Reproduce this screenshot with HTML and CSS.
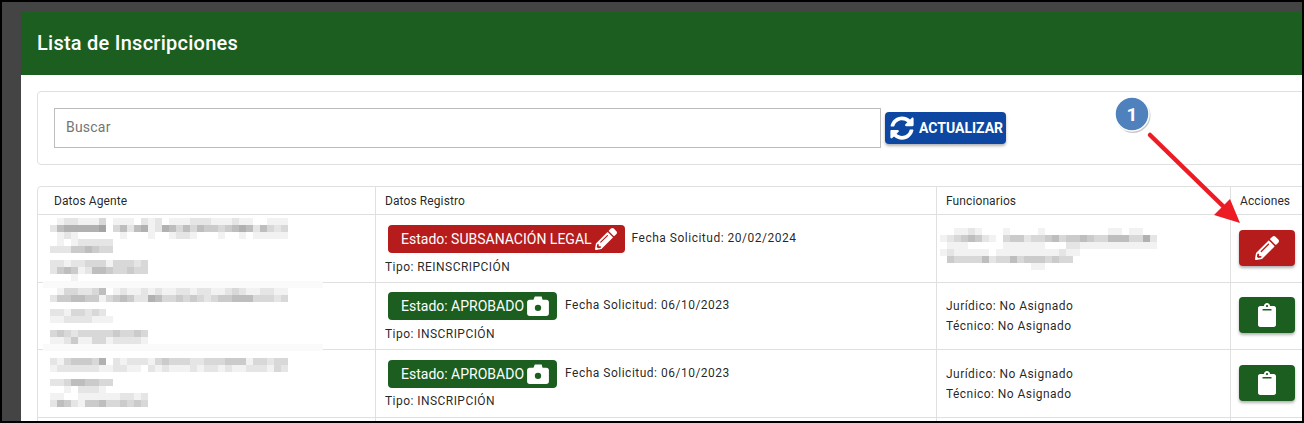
FILE: index.html
```html
<!DOCTYPE html>
<html lang="es">
<head>
    <meta charset="UTF-8">
    <title>Lista de Inscripciones</title>
    <link rel="stylesheet" href="styles.css">
</head>
<body>
    <div class="panel">
        <div class="toolbar">Lista de Inscripciones</div>
        <div class="content">
            <div class="search-card">
                <div class="search-input">Buscar</div>
                <button class="btn-update">
                    <svg class="icon-sync" viewBox="0 0 512 512"><path d="M370.72 133.28C339.458 104.008 298.888 87.962 255.848 88c-77.458.068-144.328 53.178-162.791 126.85-1.344 5.363-6.122 9.15-11.651 9.15H24.103c-7.498 0-13.194-6.807-11.807-14.176C33.933 94.924 134.813 8 256 8c66.448 0 126.791 26.136 171.315 68.685L463.03 40.97C478.149 25.851 504 36.559 504 57.941V192c0 13.255-10.745 24-24 24H345.941c-21.382 0-32.09-25.851-16.971-40.971l41.75-41.749zM32 296h134.059c21.382 0 32.09 25.851 16.971 40.971l-41.75 41.75c31.262 29.273 71.835 45.319 114.876 45.28 77.418-.07 144.315-53.144 162.787-126.849 1.344-5.363 6.122-9.15 11.651-9.15h57.304c7.498 0 13.194 6.807 11.807 14.176C478.067 417.076 377.187 504 256 504c-66.448 0-126.791-26.136-171.315-68.685L48.97 471.03C33.851 486.149 8 475.441 8 454.059V320c0-13.255 10.745-24 24-24z"/></svg>
                    ACTUALIZAR
                </button>
            </div>

            <div class="table-wrap">
                <table>
                    <thead>
                        <tr>
                            <th class="col-agent">Datos Agente</th>
                            <th class="col-reg">Datos Registro</th>
                            <th class="col-func">Funcionarios</th>
                            <th class="col-act">Acciones</th>
                        </tr>
                    </thead>
                    <tbody>
                        <tr class="row-a">
                            <td class="agent">
                                <div class="redact" data-rows="0122111301110212011122211121100111|2566666703525612653535443456525323|0121000000100010012210001001011111|0101222220|2224454330||22122333133323|24541255433433|0001"></div>
                                <div class="smudge"></div>
                            </td>
                            <td class="reg">
                                <div class="state">
                                    <span class="chip chip-red">Estado: SUBSANACIÓN LEGAL
                                        <svg class="icon-pencil" viewBox="0 0 512 512"><path d="M497.9 142.1l-46.1 46.1c-4.7 4.7-12.3 4.7-17 0l-111-111c-4.7-4.7-4.7-12.3 0-17l46.1-46.1c18.7-18.7 49.1-18.7 67.9 0l60.1 60.1c18.8 18.7 18.8 49.1 0 67.9zM284.2 99.8L21.6 362.4.4 483.9c-2.9 16.4 11.4 30.6 27.8 27.8l121.5-21.3 262.6-262.6c4.7-4.7 4.7-12.3 0-17l-111-111c-4.8-4.7-12.4-4.7-17.1 0zM124.1 339.9c-5.5-5.5-5.5-14.3 0-19.8l154-154c5.5-5.5 14.3-5.5 19.8 0s5.5 14.3 0 19.8l-154 154c-5.5 5.5-14.3 5.5-19.8 0zM88 424h48v36.3l-64.5 11.3-31.1-31.1L51.7 376H88v48z"/></svg>
                                    </span>
                                    <span class="date">Fecha Solicitud: 20/02/2024</span>
                                </div>
                                <div class="tipo">Tipo: REINSCRIPCIÓN</div>
                            </td>
                            <td class="func">
                                <div class="redact redact-func" data-rows="0011210001000010000000001101100|1234542103442334534454335553362|0111000001111110002211111111111|121111101111111112110|0433335233534443433|0000000000000110"></div>
                            </td>
                            <td class="act">
                                <button class="btn-act btn-red">
                                    <svg class="icon-edit" viewBox="0 0 512 512"><path d="M497.9 142.1l-46.1 46.1c-4.7 4.7-12.3 4.7-17 0l-111-111c-4.7-4.7-4.7-12.3 0-17l46.1-46.1c18.7-18.7 49.1-18.7 67.9 0l60.1 60.1c18.8 18.7 18.8 49.1 0 67.9zM284.2 99.8L21.6 362.4.4 483.9c-2.9 16.4 11.4 30.6 27.8 27.8l121.5-21.3 262.6-262.6c4.7-4.7 4.7-12.3 0-17l-111-111c-4.8-4.7-12.4-4.7-17.1 0zM124.1 339.9c-5.5-5.5-5.5-14.3 0-19.8l154-154c5.5-5.5 14.3-5.5 19.8 0s5.5 14.3 0 19.8l-154 154c-5.5 5.5-14.3 5.5-19.8 0zM88 424h48v36.3l-64.5 11.3-31.1-31.1L51.7 376H88v48z"/></svg>
                                </button>
                            </td>
                        </tr>
                        <tr class="row-b">
                            <td class="agent">
                                <div class="redact" data-rows="0133223501211212112212211232112211|2445544134542265334343234455533323||2213323200|1122221110||34323333343343|11241133122221"></div>
                                <div class="smudge smudge-low"></div>
                            </td>
                            <td class="reg">
                                <div class="state">
                                    <span class="chip chip-green">Estado: APROBADO
                                        <svg class="icon-camera" viewBox="0 0 24 22"><path fill-rule="evenodd" d="M3 4h4l1.500-3.500h7.500L17 4h4a3 3 0 0 1 3 3v12a3 3 0 0 1-3 3H3a3 3 0 0 1-3-3V7a3 3 0 0 1 3-3zM12 9.500a3.500 3.500 0 1 0 0 7 3.500 3.500 0 0 0 0-7z"/></svg>
                                    </span>
                                    <span class="date">Fecha Solicitud: 06/10/2023</span>
                                </div>
                                <div class="tipo">Tipo: INSCRIPCIÓN</div>
                            </td>
                            <td class="func">
                                <div class="func-line">Jurídico: No Asignado</div>
                                <div class="func-line">Técnico: No Asignado</div>
                            </td>
                            <td class="act">
                                <button class="btn-act btn-green">
                                    <svg class="icon-clip" viewBox="0 0 384 512"><path d="M384 112v352c0 26.51-21.49 48-48 48H48c-26.51 0-48-21.49-48-48V112c0-26.51 21.49-48 48-48h80c0-35.29 28.71-64 64-64s64 28.71 64 64h80c26.51 0 48 21.49 48 48zM192 40c-13.255 0-24 10.745-24 24s10.745 24 24 24 24-10.745 24-24-10.745-24-24-24m96 114v-20a6 6 0 0 0-6-6H102a6 6 0 0 0-6 6v20a6 6 0 0 0 6 6h180a6 6 0 0 0 6-6z"/></svg>
                                </button>
                            </td>
                        </tr>
                        <tr class="row-c">
                            <td class="agent">
                                <div class="redact" data-rows="2134443602122213433322333444133233|1222222112211021211121221211222132||2235544330|0010222100|11001111112212|25421445334343"></div>
                            </td>
                            <td class="reg">
                                <div class="state">
                                    <span class="chip chip-green">Estado: APROBADO
                                        <svg class="icon-camera" viewBox="0 0 24 22"><path fill-rule="evenodd" d="M3 4h4l1.500-3.500h7.500L17 4h4a3 3 0 0 1 3 3v12a3 3 0 0 1-3 3H3a3 3 0 0 1-3-3V7a3 3 0 0 1 3-3zM12 9.500a3.500 3.500 0 1 0 0 7 3.500 3.500 0 0 0 0-7z"/></svg>
                                    </span>
                                    <span class="date">Fecha Solicitud: 06/10/2023</span>
                                </div>
                                <div class="tipo">Tipo: INSCRIPCIÓN</div>
                            </td>
                            <td class="func">
                                <div class="func-line">Jurídico: No Asignado</div>
                                <div class="func-line">Técnico: No Asignado</div>
                            </td>
                            <td class="act">
                                <button class="btn-act btn-green">
                                    <svg class="icon-clip" viewBox="0 0 384 512"><path d="M384 112v352c0 26.51-21.49 48-48 48H48c-26.51 0-48-21.49-48-48V112c0-26.51 21.49-48 48-48h80c0-35.29 28.71-64 64-64s64 28.71 64 64h80c26.51 0 48 21.49 48 48zM192 40c-13.255 0-24 10.745-24 24s10.745 24 24 24 24-10.745 24-24-10.745-24-24-24m96 114v-20a6 6 0 0 0-6-6H102a6 6 0 0 0-6 6v20a6 6 0 0 0 6 6h180a6 6 0 0 0 6-6z"/></svg>
                                </button>
                            </td>
                        </tr>
                        <tr class="row-d">
                            <td></td><td></td><td></td><td></td>
                        </tr>
                    </tbody>
                </table>
            </div>
        </div>
    </div>

    <!-- callout drawn on top of the screenshot -->
    <svg class="callout" width="1300" height="419" viewBox="2 2 1300 419">
        <circle cx="1133" cy="115.500" r="17.500" fill="#c8c8c8"/>
        <circle cx="1132" cy="114" r="17" fill="#4f81bd" stroke="#fff" stroke-width="1.500"/>
        <text x="1132" y="120.500" class="callout-num" text-anchor="middle">1</text>
        <path d="M1150 135L1226 209" stroke="#ed1c24" stroke-width="4.500" stroke-linecap="round"/>
        <path d="M1240 223L1214 215L1230 199Z" fill="#ed1c24"/>
    </svg>

    <script src="redact.js"></script>
</body>
</html>
```

FILE: styles.css
```css
html {
    height: 423px;
    overflow: hidden;
}

body {
    position: relative;
    box-sizing: border-box;
    width: 1304px;
    height: 423px;
    margin: 0;
    padding: 10px 0 0 19px;
    border: 2px solid #000;
    overflow: hidden;
    background-color: #444;
    font-family: Roboto, sans-serif;
    color: rgba(0, 0, 0, 0.87);
}

.panel {
    height: 409px;
    overflow: hidden;
    background-color: #fff;
}

.toolbar {
    display: flex;
    align-items: center;
    box-sizing: border-box;
    height: 63px;
    padding: 0 16px 2px;
    background-color: #1b5e20;
    color: #fff;
    font-size: 20px;
    font-weight: 500;
    letter-spacing: 0.0125em;
}

.content {
    width: 1300px;
    padding: 16px;
}

.search-card {
    display: flex;
    align-items: center;
    gap: 4px;
    box-sizing: border-box;
    height: 74px;
    padding: 0 16px;
    margin-bottom: 21px;
    border: 1px solid #e0e0e0;
    border-radius: 4px;
}

.search-input {
    box-sizing: border-box;
    width: 827px;
    height: 40px;
    padding: 0 11px;
    border: 1px solid #bdbdbd;
    line-height: 36px;
    font-size: 14px;
    letter-spacing: 0.015em;
    color: #757575;
}

.btn-update {
    display: flex;
    align-items: center;
    gap: 5px;
    width: 121px;
    height: 32px;
    padding: 0 0 0 5px;
    border: none;
    border-radius: 4px;
    background-color: #0d47a1;
    color: #fff;
    font-family: Roboto, sans-serif;
    font-size: 14px;
    font-weight: 700;
    white-space: nowrap;
    box-shadow: 0 2px 3px rgba(0, 0, 0, 0.3);
}

.icon-sync {
    width: 24px;
    height: 24px;
    fill: #fff;
}

.table-wrap {
    border: 1px solid #e0e0e0;
    border-radius: 4px;
    overflow: hidden;
}

table {
    width: 1280px;
    border-collapse: separate;
    border-spacing: 0;
    table-layout: fixed;
    font-size: 12px;
    letter-spacing: 0.45px;
}

th, td {
    box-sizing: border-box;
    padding: 0 9px;
    border-right: 1px solid #e0e0e0;
    border-bottom: 1px solid #e0e0e0;
    text-align: left;
    font-weight: 400;
}

th {
    height: 28px;
    letter-spacing: 0.1px;
    color: rgba(0, 0, 0, 0.87);
}

.col-agent {
    width: 338px;
    padding-left: 16px;
}

.col-reg {
    width: 561px;
}

.col-func {
    width: 294px;
}

.row-a td {
    height: 68px;
}

.row-b td {
    height: 67px;
}

.row-c td {
    height: 68px;
}

.row-d td {
    height: 20px;
}

.agent {
    position: relative;
    vertical-align: top;
    padding-left: 12px;
}

.row-a .agent {
    padding-top: 3px;
}

.row-b .agent {
    padding-top: 5px;
}

.row-c .agent {
    padding-top: 8px;
}

.reg {
    vertical-align: top;
}

.row-a .reg,
.row-c .reg {
    padding-top: 10px;
}

.row-b .reg {
    padding-top: 9px;
}

.redact-row {
    display: flex;
    height: 7px;
}

.redact-cell {
    width: 7px;
    height: 7px;
}

.redact-func {
    margin-left: -6px;
}

.smudge {
    position: absolute;
    left: 5px;
    bottom: -6px;
    width: 280px;
    height: 7px;
    background-color: #fafafa;
    z-index: 1;
}

.smudge-low {
    bottom: -2px;
}

.state {
    display: flex;
    align-items: center;
    margin-bottom: 7px;
}

.row-c .state {
    margin-bottom: 6px;
}

.chip {
    display: flex;
    align-items: center;
    gap: 3px;
    height: 28px;
    margin-left: 3px;
    padding: 0 8px 0 13px;
    border-radius: 4px;
    color: #fff;
    font-size: 14px;
    letter-spacing: 0;
    white-space: nowrap;
}

.chip-red {
    background-color: #b71c1c;
}

.chip-green {
    background-color: #1b5e20;
    margin-right: 1px;
}

.date {
    margin-left: 7px;
    padding-bottom: 2px;
    letter-spacing: 0.5px;
}

.func-line + .func-line {
    margin-top: 6px;
}

.icon-pencil {
    width: 22px;
    height: 22px;
    fill: #fff;
}

.icon-camera {
    width: 22px;
    height: 20px;
    fill: #fff;
}

.act {
    padding: 0 0 2px 8px;
}

.btn-act {
    display: flex;
    align-items: center;
    justify-content: center;
    width: 56px;
    height: 36px;
    padding: 0;
    border: none;
    border-radius: 4px;
    box-shadow: 0 2px 3px rgba(0, 0, 0, 0.3);
}

.btn-red {
    background-color: #b71c1c;
}

.btn-green {
    background-color: #1b5e20;
}

.icon-edit {
    width: 24px;
    height: 24px;
    fill: #fff;
}

.icon-clip {
    width: 18px;
    height: 24px;
    fill: #fff;
}

.callout {
    position: absolute;
    top: 0;
    left: 0;
    pointer-events: none;
}

.callout-num {
    font-family: Roboto, sans-serif;
    font-size: 19px;
    font-weight: 700;
    fill: #fff;
}
```

FILE: redact.js
```js
// builds the pixelated blocks that hide the personal data
document.querySelectorAll(".redact").forEach((block) => {
    block.dataset.rows.split("|").forEach((row) => {
        const line = document.createElement("div");
        line.className = "redact-row";
        for (const ch of row) {
            const cell = document.createElement("div");
            const v = 255 - Number(ch) * 13;
            cell.className = "redact-cell";
            cell.style.backgroundColor = `rgb(${v},${v},${v})`;
            line.appendChild(cell);
        }
        block.appendChild(line);
    });
});
```
